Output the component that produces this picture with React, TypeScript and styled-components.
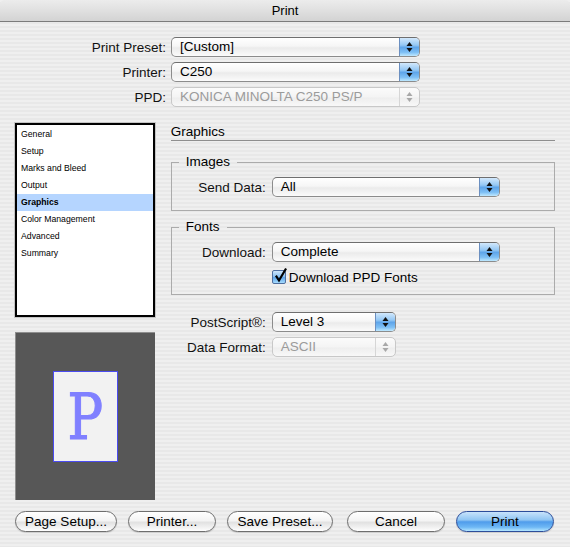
import { FC } from 'react';
import styled, { createGlobalStyle, css } from 'styled-components';

const GlobalStyle = createGlobalStyle`
	html, body {
		margin: 0;
		padding: 0;
		background: #ececec;
	}
	body {
		font-family: 'Liberation Sans', Arial, sans-serif;
		font-size: 13.5px;
		color: #000;
	}
`;

const Window = styled.div`
	width: 570px;
	height: 547px;
	display: flex;
	flex-direction: column;
	background: repeating-linear-gradient(
		to bottom,
		#efefef 0,
		#efefef 2px,
		#e8e8e8 2px,
		#e8e8e8 4px
	);
	overflow: hidden;
`;

const TitleBar = styled.div`
	height: 21px;
	display: flex;
	align-items: center;
	justify-content: center;
	font-size: 13px;
	border-radius: 5px 5px 0 0;
	border-bottom: 1px solid #7b7b7b;
	background: linear-gradient(to bottom, #ececec 0%, #e0e0e0 50%, #d3d3d3 100%);
`;

const Body = styled.div`
	flex: 1;
	display: flex;
	flex-direction: column;
	padding: 15px 15px 0;
`;

const TopForm = styled.div`
	display: grid;
	grid-template-columns: 151px 249px;
	column-gap: 5px;
	row-gap: 5px;
	align-items: center;
`;

const Label = styled.div`
	text-align: right;
	white-space: nowrap;
	color: #111;
`;

const PopupBox = styled.div<{ $disabled?: boolean }>`
	height: 20px;
	box-sizing: border-box;
	display: flex;
	align-items: stretch;
	border-radius: 5px;
	border: 1px solid #8c8c8c;
	border-top-color: #6f6f6f;
	background: linear-gradient(to bottom, #ffffff 0%, #f6f6f6 45%, #ebebeb 55%, #fbfbfb 100%);
	overflow: hidden;
	${(p) =>
		p.$disabled &&
		css`
			border-color: #c8c8c8;
			background: linear-gradient(to bottom, #fbfbfb 0%, #f4f4f4 50%, #eeeeee 55%, #f8f8f8 100%);
		`}
`;

const PopupText = styled.div<{ $disabled?: boolean }>`
	flex: 1;
	padding-left: 8px;
	line-height: 18px;
	white-space: nowrap;
	color: ${(p) => (p.$disabled ? '#9b9b9b' : '#000')};
`;

const Stepper = styled.div<{ $disabled?: boolean }>`
	width: 19px;
	display: flex;
	align-items: center;
	justify-content: center;
	border-left: 1px solid #6b8fc0;
	background: linear-gradient(
		to bottom,
		#d2e8fc 0%,
		#93c7f4 40%,
		#5ea5ea 52%,
		#7fc0f5 80%,
		#bfe9ff 100%
	);
	${(p) =>
		p.$disabled &&
		css`
			border-left-color: #d6d6d6;
			background: transparent;
		`}
`;

const Arrows: FC<{ disabled?: boolean }> = ({ disabled }) => (
	<svg width="7" height="12" viewBox="0 0 7 12">
		<path d="M3.5 1 L6.5 5 L0.5 5 Z M3.5 11 L6.5 7 L0.5 7 Z" fill={disabled ? '#a8a8a8' : '#111'} />
	</svg>
);

interface PopupProps {
	value: string;
	disabled?: boolean;
}

const Popup: FC<PopupProps> = ({ value, disabled }) => (
	<PopupBox $disabled={disabled}>
		<PopupText $disabled={disabled}>{value}</PopupText>
		<Stepper $disabled={disabled}>
			<Arrows disabled={disabled} />
		</Stepper>
	</PopupBox>
);

const Main = styled.div`
	display: flex;
	gap: 16px;
	margin-top: 16px;
`;

const Sidebar = styled.div`
	width: 140px;
	display: flex;
	flex-direction: column;
	gap: 15px;
`;

const List = styled.ul`
	margin: 0;
	padding: 1px 0 0;
	list-style: none;
	height: 194px;
	box-sizing: border-box;
	border: 2px solid #000;
	background: #fff;
	box-shadow: 0 0 0 1px #c4c4c4;
`;

const ListItem = styled.li<{ $active?: boolean }>`
	height: 17px;
	line-height: 17px;
	padding-left: 4px;
	font-size: 8.7px;
	white-space: nowrap;
	${(p) =>
		p.$active &&
		css`
			background: #b5d5ff;
			font-weight: bold;
		`}
`;

const Preview = styled.div`
	height: 168px;
	box-sizing: border-box;
	display: flex;
	align-items: center;
	justify-content: center;
	background: #575757;
	border-top: 1px solid #8e8e8e;
	border-left: 1px solid #8e8e8e;
`;

const Page = styled.div`
	width: 65px;
	height: 91px;
	flex: none;
	box-sizing: border-box;
	display: flex;
	align-items: center;
	justify-content: center;
	background: #f2f2f2;
	border: 1px solid #4b4bf0;
	overflow: hidden;
`;

const PageGlyph = styled.span`
	display: block;
	color: #8080ff;
	font-family: 'DejaVu Serif', 'Liberation Serif', serif;
	font-size: 63px;
	line-height: 1;
	-webkit-text-stroke: 1.2px #8080ff;
	transform: scaleX(0.84);
	margin-top: 2px;
`;

const Panel = styled.div`
	width: 385px;
	display: flex;
	flex-direction: column;
`;

const Heading = styled.div`
	padding-top: 1px;
	line-height: 16px;
	border-bottom: 1px solid #8f8f8f;
`;

const Group = styled.fieldset<{ $first?: boolean }>`
	margin: ${(p) => (p.$first ? '13px' : '8px')} 0 0;
	padding: 0 0 ${(p) => (p.$first ? '13px' : '9px')};
	border: 1px solid #ababab;
	display: flex;
	flex-direction: column;
`;

const Legend = styled.legend`
	margin-left: 7px;
	padding: 0 7px;
	line-height: 16px;
`;

const GroupForm = styled.div`
	display: grid;
	grid-template-columns: 94px 228px;
	column-gap: 6px;
	row-gap: 7px;
	align-items: center;
	margin-top: 7px;
`;

const PanelForm = styled.div`
	display: grid;
	grid-template-columns: 95px 124px;
	column-gap: 6px;
	row-gap: 5px;
	align-items: center;
	margin-top: 17px;
`;

const CheckRow = styled.label`
	grid-column: 2;
	display: flex;
	align-items: center;
	gap: 3px;
	height: 16px;
`;

const CheckBox = styled.span`
	position: relative;
	width: 14px;
	height: 14px;
	box-sizing: border-box;
	border: 1px solid #4f6f9f;
	border-radius: 2px;
	background: linear-gradient(to bottom, #cfe6fb 0%, #8cc2f2 45%, #5ea4ea 55%, #a6dcfd 100%);
`;

const CheckMark = styled.svg`
	position: absolute;
	left: 1px;
	top: -3px;
`;

const ButtonBar = styled.div`
	display: flex;
	align-items: center;
	margin-top: 11px;
`;

const Button = styled.button<{ $w: number; $primary?: boolean; $gap: number }>`
	width: ${(p) => p.$w}px;
	height: 21px;
	margin-left: ${(p) => p.$gap}px;
	padding: 0;
	font-family: inherit;
	font-size: 13.5px;
	color: #000;
	border-radius: 11px;
	border: 1px solid #6e6e6e;
	background: linear-gradient(to bottom, #ffffff 0%, #f4f4f4 45%, #e2e2e2 55%, #f7f7f7 90%, #ffffff 100%);
	box-shadow: 0 1px 1px rgba(0, 0, 0, 0.15);
	${(p) =>
		p.$primary &&
		css`
			border-color: #2c4d9a;
			background: linear-gradient(
				to bottom,
				#c8e3fb 0%,
				#8fc5f3 42%,
				#4f9ceb 52%,
				#6fb8f5 80%,
				#b5e7ff 100%
			);
		`}
`;

const listItems = [
	'General',
	'Setup',
	'Marks and Bleed',
	'Output',
	'Graphics',
	'Color Management',
	'Advanced',
	'Summary',
];

const App: FC = () => (
	<>
		<GlobalStyle />
		<Window>
			<TitleBar>Print</TitleBar>
			<Body>
				<TopForm>
					<Label>Print Preset:</Label>
					<Popup value="[Custom]" />
					<Label>Printer:</Label>
					<Popup value="C250" />
					<Label>PPD:</Label>
					<Popup value="KONICA MINOLTA C250 PS/P" disabled />
				</TopForm>

				<Main>
					<Sidebar>
						<List>
							{listItems.map((item) => (
								<ListItem key={item} $active={item === 'Graphics'}>
									{item}
								</ListItem>
							))}
						</List>
						<Preview>
							<Page>
								<PageGlyph>P</PageGlyph>
							</Page>
						</Preview>
					</Sidebar>

					<Panel>
						<Heading>Graphics</Heading>

						<Group $first>
							<Legend>Images</Legend>
							<GroupForm>
								<Label>Send Data:</Label>
								<Popup value="All" />
							</GroupForm>
						</Group>

						<Group>
							<Legend>Fonts</Legend>
							<GroupForm>
								<Label>Download:</Label>
								<Popup value="Complete" />
								<CheckRow>
									<CheckBox>
										<CheckMark width="14" height="16" viewBox="0 0 14 16">
											<path
												d="M2.5 8.5 L5 12.5 L11.5 1.5"
												fill="none"
												stroke="#000"
												strokeWidth="2.2"
												strokeLinecap="square"
											/>
										</CheckMark>
									</CheckBox>
									Download PPD Fonts
								</CheckRow>
							</GroupForm>
						</Group>

						<PanelForm>
							<Label>PostScript®:</Label>
							<Popup value="Level 3" />
							<Label>Data Format:</Label>
							<Popup value="ASCII" disabled />
						</PanelForm>
					</Panel>
				</Main>

				<ButtonBar>
					<Button $w={102} $gap={0}>Page Setup...</Button>
					<Button $w={88} $gap={11}>Printer...</Button>
					<Button $w={106} $gap={11}>Save Preset...</Button>
					<Button $w={98} $gap={14}>Cancel</Button>
					<Button $w={98} $gap={11} $primary>
						Print
					</Button>
				</ButtonBar>
			</Body>
		</Window>
	</>
);

export default App;
